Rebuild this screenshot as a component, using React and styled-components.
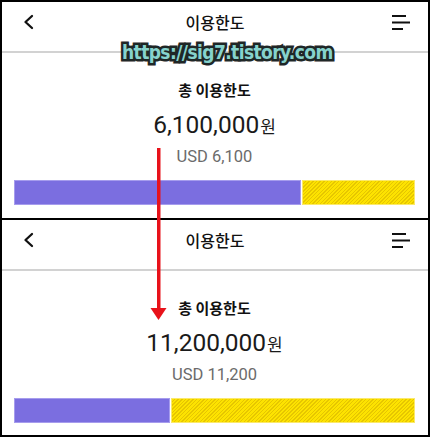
import React from "react";
import styled, { createGlobalStyle } from "styled-components";

const Global = createGlobalStyle`
  html, body { margin: 0; padding: 0; background: #fff; }
  * { box-sizing: border-box; }
`;

const Frame = styled.div`
  position: relative;
  width: 430px;
  height: 437px;
  border: 2px solid #000;
  display: flex;
  flex-direction: column;
  background: #fff;
  overflow: hidden;
`;

const Panel = styled.section`
  height: 216px;
  display: flex;
  flex-direction: column;
`;

const Separator = styled.div`
  height: 2px;
  background: #000;
  flex-shrink: 0;
`;

const Header = styled.header`
  height: 40px;
  display: flex;
  align-items: center;
  justify-content: space-between;
  padding: 0 18px 0 19px;
  position: relative;
`;

const Title = styled.h1`
  position: absolute;
  left: 0;
  right: 0;
  text-align: center;
  margin: 0;
  font-family: "Noto Sans CJK KR", sans-serif;
  font-size: 16px;
  font-weight: 500;
  color: #111;
  pointer-events: none;
`;

const IconBtn = styled.button`
  border: 0;
  background: none;
  padding: 0;
  display: flex;
  width: 18px;
  height: 16px;
`;

const Rule = styled.div`
  margin-top: 9px;
  height: 2px;
  background: #d2d2d2;
`;

const Summary = styled.div`
  flex: 1;
  display: flex;
  flex-direction: column;
  align-items: center;
  padding: 26px 13px 0 12px;
`;

const Label = styled.div`
  font-family: "Noto Sans CJK KR", sans-serif;
  font-size: 15px;
  font-weight: 700;
  line-height: 22px;
  color: #111;
`;

const Amount = styled.div`
  margin-top: 8px;
  display: flex;
  align-items: baseline;
  line-height: 32px;
  color: #1a1a1a;
`;

const Number = styled.span`
  font-family: Roboto, sans-serif;
  font-size: 24.5px;
`;

const Unit = styled.span`
  font-family: "Noto Sans CJK KR", sans-serif;
  font-size: 17px;
  margin-left: 1px;
`;

const Usd = styled.div`
  margin-top: 4px;
  font-family: Roboto, sans-serif;
  font-size: 16.5px;
  line-height: 22px;
  color: #6b6b6b;
`;

const Bar = styled.div`
  margin-top: 12px;
  align-self: stretch;
  height: 25px;
  display: flex;
  gap: 1px;
`;

const Used = styled.div`
  background: #7b6ee0;
  border: 1px solid #a69ced;
`;

const Remain = styled.div`
  flex: 1;
  background: repeating-linear-gradient(
    135deg,
    #fde300 0px,
    #fde300 1.6px,
    #e6c600 1.6px,
    #e6c600 2.6px
  );
  border: 1px solid #fbe96a;
`;

const Watermark = styled.div`
  position: absolute;
  left: 120px;
  top: 37px;
  width: 210px;
  text-align: center;
  font-family: "DejaVu Sans Condensed", "DejaVu Sans", sans-serif;
  font-weight: 700;
  font-size: 19px;
  letter-spacing: -0.6px;
  color: #86d3cd;
  -webkit-text-stroke: 5px #1f2727;
  paint-order: stroke fill;
  line-height: 26px;
  white-space: nowrap;
`;

const Arrow = styled.svg`
  position: absolute;
  left: 146px;
  top: 144px;
`;

function Back() {
  return (
    <IconBtn aria-label="back">
      <svg width="18" height="16" viewBox="0 0 18 16">
        <polyline points="11,2 4.5,8 11,14" fill="none" stroke="#111" strokeWidth="2.3" strokeLinecap="round" strokeLinejoin="round" />
      </svg>
    </IconBtn>
  );
}

function Menu() {
  return (
    <IconBtn aria-label="menu">
      <svg width="18" height="16" viewBox="0 0 18 16">
        <rect x="0" y="1" width="14" height="2" fill="#111" />
        <rect x="0" y="7.5" width="18" height="2" fill="#111" />
        <rect x="0" y="14" width="11" height="2" fill="#111" />
      </svg>
    </IconBtn>
  );
}

function LimitPanel({ amount, usd, ratio }) {
  return (
    <Panel>
      <Header>
        <Back />
        <Title>이용한도</Title>
        <Menu />
      </Header>
      <Rule />
      <Summary>
        <Label>총 이용한도</Label>
        <Amount>
          <Number>{amount}</Number>
          <Unit>원</Unit>
        </Amount>
        <Usd>USD {usd}</Usd>
        <Bar>
          <Used style={{ width: `${ratio}%` }} />
          <Remain />
        </Bar>
      </Summary>
    </Panel>
  );
}

export default function App() {
  return (
    <>
      <Global />
      <Frame>
        <LimitPanel amount="6,100,000" usd="6,100" ratio={71.5} />
        <Separator />
        <LimitPanel amount="11,200,000" usd="11,200" ratio={38.9} />
        <Watermark>https://sig7.tistory.com</Watermark>
        <Arrow width="20" height="176" viewBox="0 0 20 176">
          <rect x="9" y="2" width="3.5" height="163" fill="#e8121a" />
          <polygon points="2.5,162 18.5,162 10.5,174" fill="#e8121a" />
        </Arrow>
      </Frame>
    </>
  );
}
